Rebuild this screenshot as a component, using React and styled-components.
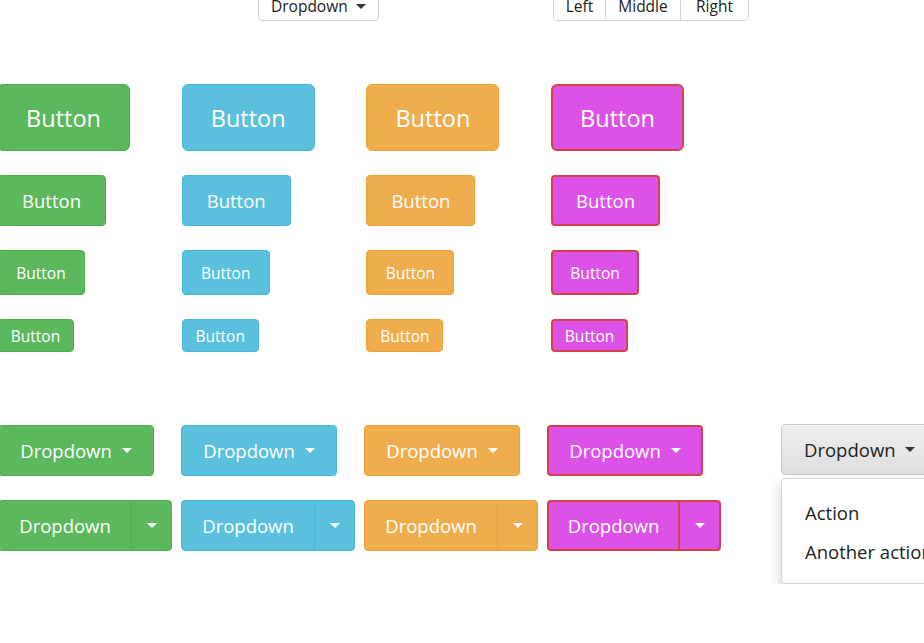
import React from "react";
import styled, { createGlobalStyle } from "styled-components";

const Global = createGlobalStyle`
  html, body {
    margin: 0;
    padding: 0;
    background: #fff;
    overflow: hidden;
  }
  body {
    font-family: "Open Sans", "Noto Sans", sans-serif;
  }
`;

const colors = {
  green: { bg: "#5cb85c", border: "#4cae4c" },
  blue: { bg: "#5bc0de", border: "#46b8da" },
  orange: { bg: "#f0ad4e", border: "#eea236" },
  magenta: { bg: "#dd52e6", border: "#d6404a" },
};

const sizes = {
  lg: { w: 133, h: 67, font: 23.5, radius: 6 },
  md: { w: 109, h: 51, font: 18.5, radius: 4 },
  sm: { w: 88, h: 45, font: 15.5, radius: 4 },
  xs: { w: 77, h: 33, font: 15.5, radius: 4 },
};

const bw = (c) => (c === "magenta" ? 2 : 1);

const Page = styled.div`
  margin: -9px 0 0 -3px;
  width: 1000px;
`;

const TopBar = styled.div`
  display: flex;
  align-items: flex-start;
  padding-left: 261px;
  gap: 174px;
`;

const PlainDropdown = styled.button`
  display: flex;
  align-items: center;
  gap: 8px;
  height: 30px;
  width: 121px;
  padding: 0 12px;
  border: 1px solid #cfcfcf;
  border-radius: 4px;
  background: #fff;
  color: #222;
  font: inherit;
  font-size: 15.5px;
`;

const Group = styled.div`
  display: flex;
  border: 1px solid #cfcfcf;
  border-radius: 4px;
  height: 28px;
  overflow: hidden;
`;

const GroupItem = styled.button`
  width: ${(p) => p.$w}px;
  background: #fff;
  border: none;
  border-left: ${(p) => (p.$first ? "none" : "1px solid #d4d4d4")};
  color: #222;
  font: inherit;
  font-size: 15.5px;
  padding: 0;
  display: flex;
  align-items: center;
  justify-content: center;
`;

const ButtonGrid = styled.div`
  margin-top: 63px;
  display: grid;
  grid-template-columns: repeat(4, 184.7px);
  row-gap: 24px;
  justify-items: start;
`;

const Btn = styled.button`
  box-sizing: border-box;
  width: ${(p) => sizes[p.$size].w}px;
  height: ${(p) => sizes[p.$size].h}px;
  font: inherit;
  font-size: ${(p) => sizes[p.$size].font}px;
  color: #fff;
  background: ${(p) => colors[p.$color].bg};
  border: ${(p) => bw(p.$color)}px solid ${(p) => colors[p.$color].border};
  border-radius: ${(p) => sizes[p.$size].radius}px;
  padding: 0;
  display: flex;
  align-items: center;
  justify-content: center;
`;

const DropSection = styled.div`
  margin-top: 73px;
  display: flex;
  align-items: flex-start;
  margin-left: 1px;
`;

const DropGrid = styled.div`
  display: grid;
  grid-template-columns: repeat(4, 183px);
  row-gap: 24px;
  justify-items: start;
`;

const ColorDrop = styled.button`
  box-sizing: border-box;
  display: flex;
  align-items: center;
  justify-content: center;
  gap: 10px;
  width: 156px;
  height: 51px;
  padding: 0;
  font: inherit;
  font-size: 18.5px;
  color: #fff;
  background: ${(p) => colors[p.$color].bg};
  border: ${(p) => bw(p.$color)}px solid ${(p) => colors[p.$color].border};
  border-radius: 4px;
`;

const Split = styled.div`
  display: flex;
  width: 174px;
  height: 51px;
  box-sizing: border-box;
  background: ${(p) => colors[p.$color].bg};
  border: ${(p) => bw(p.$color)}px solid ${(p) => colors[p.$color].border};
  border-radius: 4px;
  color: #fff;
  font-size: 18.5px;
`;

const SplitMain = styled.div`
  flex: 1;
  display: flex;
  align-items: center;
  justify-content: center;
  box-sizing: border-box;
  border-right: ${(p) => bw(p.$color)}px solid ${(p) => colors[p.$color].border};
`;

const SplitCaret = styled.div`
  width: 39px;
  display: flex;
  align-items: center;
  justify-content: center;
`;

const Caret = styled.span`
  display: inline-block;
  width: 0;
  height: 0;
  border-left: 5px solid transparent;
  border-right: 5px solid transparent;
  border-top: 5px solid ${(p) => p.$c || "#fff"};
`;

const OpenDrop = styled.div`
  margin-left: 51px;
  margin-top: -1px;
  display: flex;
  flex-direction: column;
  gap: 3px;
`;

const GrayButton = styled.button`
  display: flex;
  align-items: center;
  gap: 9px;
  width: 160px;
  height: 51px;
  padding: 0 0 0 22px;
  font: inherit;
  font-size: 18.5px;
  color: #222;
  background: linear-gradient(#efefef, #dfdfdf);
  border: 1px solid #c9c9c9;
  border-radius: 4px;
  box-shadow: inset 0 1px 0 rgba(255, 255, 255, 0.5);
`;

const Menu = styled.ul`
  list-style: none;
  margin: 0;
  padding: 14px 0;
  width: 200px;
  height: 106px;
  box-sizing: border-box;
  background: #fff;
  border: 1px solid #d6d6d6;
  border-radius: 4px;
  box-shadow: 0 6px 14px rgba(0, 0, 0, 0.18);
`;

const MenuItem = styled.li`
  padding: 0 0 0 23px;
  font-size: 18.5px;
  line-height: 39px;
  color: #222;
  white-space: nowrap;
`;

const order = ["green", "blue", "orange", "magenta"];

export default function App() {
  return (
    <>
      <Global />
      <Page>
        <TopBar>
          <PlainDropdown>
            Dropdown <Caret $c="#333" />
          </PlainDropdown>
          <Group>
            <GroupItem $first $w={51}>Left</GroupItem>
            <GroupItem $w={75}>Middle</GroupItem>
            <GroupItem $w={68}>Right</GroupItem>
          </Group>
        </TopBar>

        <ButtonGrid>
          {["lg", "md", "sm", "xs"].map((s) =>
            order.map((c) => (
              <Btn key={s + c} $size={s} $color={c}>
                Button
              </Btn>
            ))
          )}
        </ButtonGrid>

        <DropSection>
          <DropGrid>
            {order.map((c) => (
              <ColorDrop key={"d" + c} $color={c}>
                Dropdown <Caret />
              </ColorDrop>
            ))}
            {order.map((c) => (
              <Split key={"s" + c} $color={c}>
                <SplitMain $color={c}>Dropdown</SplitMain>
                <SplitCaret>
                  <Caret />
                </SplitCaret>
              </Split>
            ))}
          </DropGrid>
          <OpenDrop>
            <GrayButton>
              Dropdown <Caret $c="#333" />
            </GrayButton>
            <Menu>
              <MenuItem>Action</MenuItem>
              <MenuItem>Another action</MenuItem>
            </Menu>
          </OpenDrop>
        </DropSection>
      </Page>
    </>
  );
}
